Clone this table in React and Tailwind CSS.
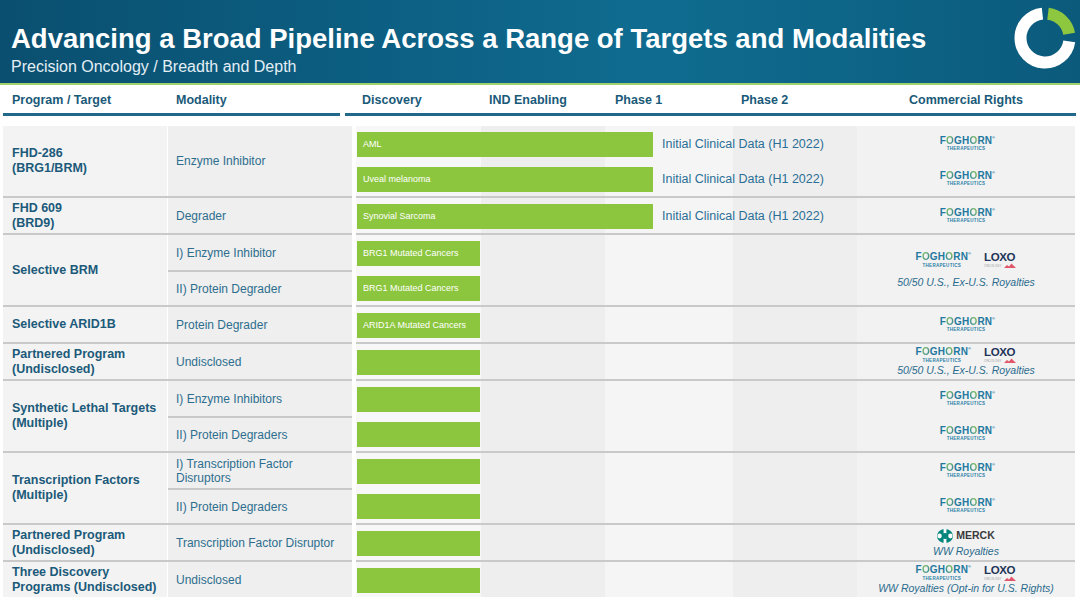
import React from "react";

const stripes =
  "bg-[linear-gradient(90deg,#f7f7f7_0px,#f7f7f7_125px,#eeeeee_125px,#eeeeee_249px,#f5f5f5_249px,#f5f5f5_377px,#eeeeee_377px,#eeeeee_501px)]";

const groups = [
  {
    name: ["FHD-286", "(BRG1/BRM)"],
    mods: [{ text: ["Enzyme Inhibitor"], span: 2 }],
    bars: [
      { long: true, label: "AML" },
      { long: true, label: "Uveal melanoma" },
    ],
    rights: [{ kind: "fog" }, { kind: "fog" }],
  },
  {
    name: ["FHD 609", "(BRD9)"],
    mods: [{ text: ["Degrader"], span: 1 }],
    bars: [{ long: true, label: "Synovial Sarcoma" }],
    rights: [{ kind: "fog" }],
  },
  {
    name: ["Selective BRM"],
    mods: [
      { text: ["I) Enzyme Inhibitor"], span: 1 },
      { text: ["II) Protein Degrader"], span: 1 },
    ],
    bars: [{ label: "BRG1 Mutated Cancers" }, { label: "BRG1 Mutated Cancers" }],
    rights: [{ kind: "loxo", span: 2, note: "50/50 U.S., Ex-U.S. Royalties", loose: true }],
  },
  {
    name: ["Selective ARID1B"],
    mods: [{ text: ["Protein Degrader"], span: 1 }],
    bars: [{ label: "ARID1A Mutated Cancers" }],
    rights: [{ kind: "fog" }],
  },
  {
    name: ["Partnered Program", "(Undisclosed)"],
    mods: [{ text: ["Undisclosed"], span: 1 }],
    bars: [{ label: "" }],
    rights: [{ kind: "loxo", note: "50/50 U.S., Ex-U.S. Royalties" }],
  },
  {
    name: ["Synthetic Lethal Targets", "(Multiple)"],
    mods: [
      { text: ["I) Enzyme Inhibitors"], span: 1 },
      { text: ["II) Protein Degraders"], span: 1 },
    ],
    bars: [{ label: "" }, { label: "" }],
    rights: [{ kind: "fog" }, { kind: "fog" }],
  },
  {
    name: ["Transcription Factors", "(Multiple)"],
    mods: [
      { text: ["I) Transcription Factor", "Disruptors"], span: 1 },
      { text: ["II) Protein Degraders"], span: 1 },
    ],
    bars: [{ label: "" }, { label: "" }],
    rights: [{ kind: "fog" }, { kind: "fog" }],
  },
  {
    name: ["Partnered Program", "(Undisclosed)"],
    mods: [{ text: ["Transcription Factor Disruptor"], span: 1 }],
    bars: [{ label: "" }],
    rights: [{ kind: "merck" }],
  },
  {
    name: ["Three Discovery", "Programs (Undisclosed)"],
    mods: [{ text: ["Undisclosed"], span: 1 }],
    bars: [{ label: "" }],
    rights: [{ kind: "loxo", note: "WW Royalties (Opt-in for U.S. Rights)" }],
  },
];

function arc(cx, cy, r, a0, a1) {
  const p = (a) => [
    cx + r * Math.sin((a * Math.PI) / 180),
    cy - r * Math.cos((a * Math.PI) / 180),
  ];
  const [x0, y0] = p(a0);
  const [x1, y1] = p(a1);
  const large = a1 - a0 > 180 ? 1 : 0;
  return `M${x0} ${y0} A${r} ${r} 0 ${large} 1 ${x1} ${y1}`;
}

function RingLogo() {
  return (
    <svg width="62" height="62" viewBox="0 0 62 62">
      <path d={arc(31, 31, 24.5, 98, 354)} stroke="#ffffff" strokeWidth="12" fill="none" />
      <path d={arc(31, 31, 24.5, 7, 80)} stroke="#8dc63f" strokeWidth="12" fill="none" />
    </svg>
  );
}

function Foghorn() {
  return (
    <div className="flex flex-col items-center leading-none">
      <div className="relative text-[10px] font-bold tracking-[0.2px] text-[#23789f]">
        F
        <span className="bg-gradient-to-br from-[#8dc63f] to-[#1f7aa0] bg-clip-text text-transparent">O</span>
        GH
        <span className="bg-gradient-to-bl from-[#8dc63f] to-[#1f7aa0] bg-clip-text text-transparent">O</span>
        RN
        <span className="absolute -right-[3px] top-0 text-[4px]">®</span>
      </div>
      <div className="mt-[1.5px] text-[4.5px] font-bold tracking-[0.3px] text-[#2b80a6]">THERAPEUTICS</div>
    </div>
  );
}

function Loxo() {
  return (
    <div className="flex flex-col items-start leading-none">
      <div className="text-[11.5px] font-bold tracking-[-0.4px] text-[#1f3559]">LOXO</div>
      <div className="flex items-end">
        <span className="text-[3px] text-[#9a9a9a]">ONCOLOGY</span>
        <svg width="12" height="5" viewBox="0 0 12 5" className="ml-[3px]">
          <path d="M0 5 L3 2 L5 3.5 L7.5 0.5 L10 3 L12 5 Z" fill="#e0566b" />
        </svg>
      </div>
    </div>
  );
}

function MerckMark() {
  return (
    <svg width="16" height="14" viewBox="0 0 16 14">
      <ellipse cx="8" cy="7" rx="8" ry="7" fill="#00857c" />
      <ellipse cx="2.6" cy="7" rx="2.2" ry="2.4" fill="#ffffff" />
      <ellipse cx="13.4" cy="7" rx="2.2" ry="2.4" fill="#ffffff" />
      <rect x="6.6" y="0" width="2.8" height="14" fill="#ffffff" />
      <circle cx="8" cy="7" r="3" fill="#00857c" />
    </svg>
  );
}

function Rights({ r }) {
  const h = r.span === 2 ? "h-[70px]" : "h-[35px]";
  if (r.kind === "fog") {
    return (
      <div className={`${h} flex items-center justify-center`}>
        <Foghorn />
      </div>
    );
  }
  if (r.kind === "merck") {
    return (
      <div className={`${h} flex flex-col items-center justify-center`}>
        <div className="flex items-center gap-[3px]">
          <MerckMark />
          <span className="text-[10.5px] font-bold leading-none text-[#3a3a3a]">MERCK</span>
        </div>
        <div className="mt-[2px] text-[10.5px] italic leading-[12px] text-[#2b6b8d]">WW Royalties</div>
      </div>
    );
  }
  return (
    <div className={`${h} flex flex-col items-center justify-center`}>
      <div className="flex items-center gap-[16px]">
        <Foghorn />
        <Loxo />
      </div>
      <div
        className={`${r.loose ? "mt-[8px]" : "mt-[1px]"} text-[10.5px] italic leading-[12px] text-[#2b6b8d]`}
      >
        {r.note}
      </div>
    </div>
  );
}

function Group({ g, first }) {
  const border = first ? "" : "border-t-2 border-[#c9c9c9]";
  return (
    <div className="flex">
      <div className={`flex w-[349px] ${border}`}>
        <div className="flex w-[165px] flex-col justify-center border-r border-white bg-[#f3f3f3] pl-[9px] text-[12.5px] font-bold leading-[15px] text-[#1b5a7a]">
          {g.name.map((l, i) => (
            <div key={i}>{l}</div>
          ))}
        </div>
        <div className="flex w-[184px] flex-col bg-[#efefef]">
          {g.mods.map((m, i) => (
            <div
              key={i}
              className={`${m.span === 2 ? "h-[70px]" : "h-[35px]"} ${
                i > 0 ? "border-t-2 border-[#c9c9c9]" : ""
              } flex flex-col justify-center pl-[8px] text-[12px] leading-[14px] text-[#2d6e8e]`}
            >
              {m.text.map((l, j) => (
                <div key={j}>{l}</div>
              ))}
            </div>
          ))}
        </div>
      </div>
      <div className="w-[4px]" />
      <div className={`flex w-[719px] ${border}`}>
        <div className={`flex w-[501px] flex-col ${stripes}`}>
          {g.bars.map((b, i) => (
            <div key={i} className="flex h-[35px] items-start pt-[6px]">
              <div
                className={`${b.long ? "w-[296px]" : "w-[123px]"} ml-[1px] h-[25px] bg-[#8cc63e] pl-[6px] text-[9px] leading-[25px] text-white`}
              >
                {b.label}
              </div>
              {b.long && (
                <div className="ml-[9px] text-[12.5px] leading-[25px] text-[#2a6f95]">
                  Initial Clinical Data (H1 2022)
                </div>
              )}
            </div>
          ))}
        </div>
        <div className="flex w-[218px] flex-col bg-[#f2f2f2]">
          {g.rights.map((r, i) => (
            <Rights key={i} r={r} />
          ))}
        </div>
      </div>
    </div>
  );
}

export default function App() {
  return (
    <div className="h-[608px] w-[1080px] overflow-hidden bg-white font-['Liberation_Sans',Arial,sans-serif]">
      {/* Header */}
      <div className="flex h-[83px] justify-between bg-[linear-gradient(90deg,#0a4f70_0%,#0c5f82_35%,#0f6c90_60%,#0d6486_80%,#0b5a7c_100%)]">
        <div className="pl-[11px] pt-[23px]">
          <div className="text-[27.5px] font-bold leading-[32px] text-white">
            Advancing a Broad Pipeline Across a Range of Targets and Modalities
          </div>
          <div className="mt-[2px] text-[16px] leading-[20px] text-[#e4eff5]">
            Precision Oncology / Breadth and Depth
          </div>
        </div>
        <div className="pr-[4px] pt-[7px]">
          <RingLogo />
        </div>
      </div>
      <div className="h-[2px] bg-[#9fd26c]" />

      {/* Column labels */}
      <div className="flex h-[28px] items-center pl-[3px] pt-[3px] text-[12.5px] font-bold text-[#1a5a79]">
        <div className="w-[165px] pl-[9px]">Program / Target</div>
        <div className="w-[184px] pl-[8px]">Modality</div>
        <div className="w-[4px]" />
        <div className="w-[125px] pl-[6px]">Discovery</div>
        <div className="w-[124px] pl-[8px]">IND Enabling</div>
        <div className="w-[128px] pl-[10px]">Phase 1</div>
        <div className="w-[124px] pl-[8px]">Phase 2</div>
        <div className="w-[218px] text-center">Commercial Rights</div>
      </div>
      <div className="flex">
        <div className="ml-[3px] h-[3px] w-[337px] bg-[#22688a]" />
        <div className="ml-[5px] h-[3px] w-[731px] bg-[#22688a]" />
      </div>
      <div className="h-[10px]" />

      {/* Table body */}
      <div className="pl-[3px]">
        {groups.map((g, i) => (
          <Group key={i} g={g} first={i === 0} />
        ))}
      </div>
    </div>
  );
}
